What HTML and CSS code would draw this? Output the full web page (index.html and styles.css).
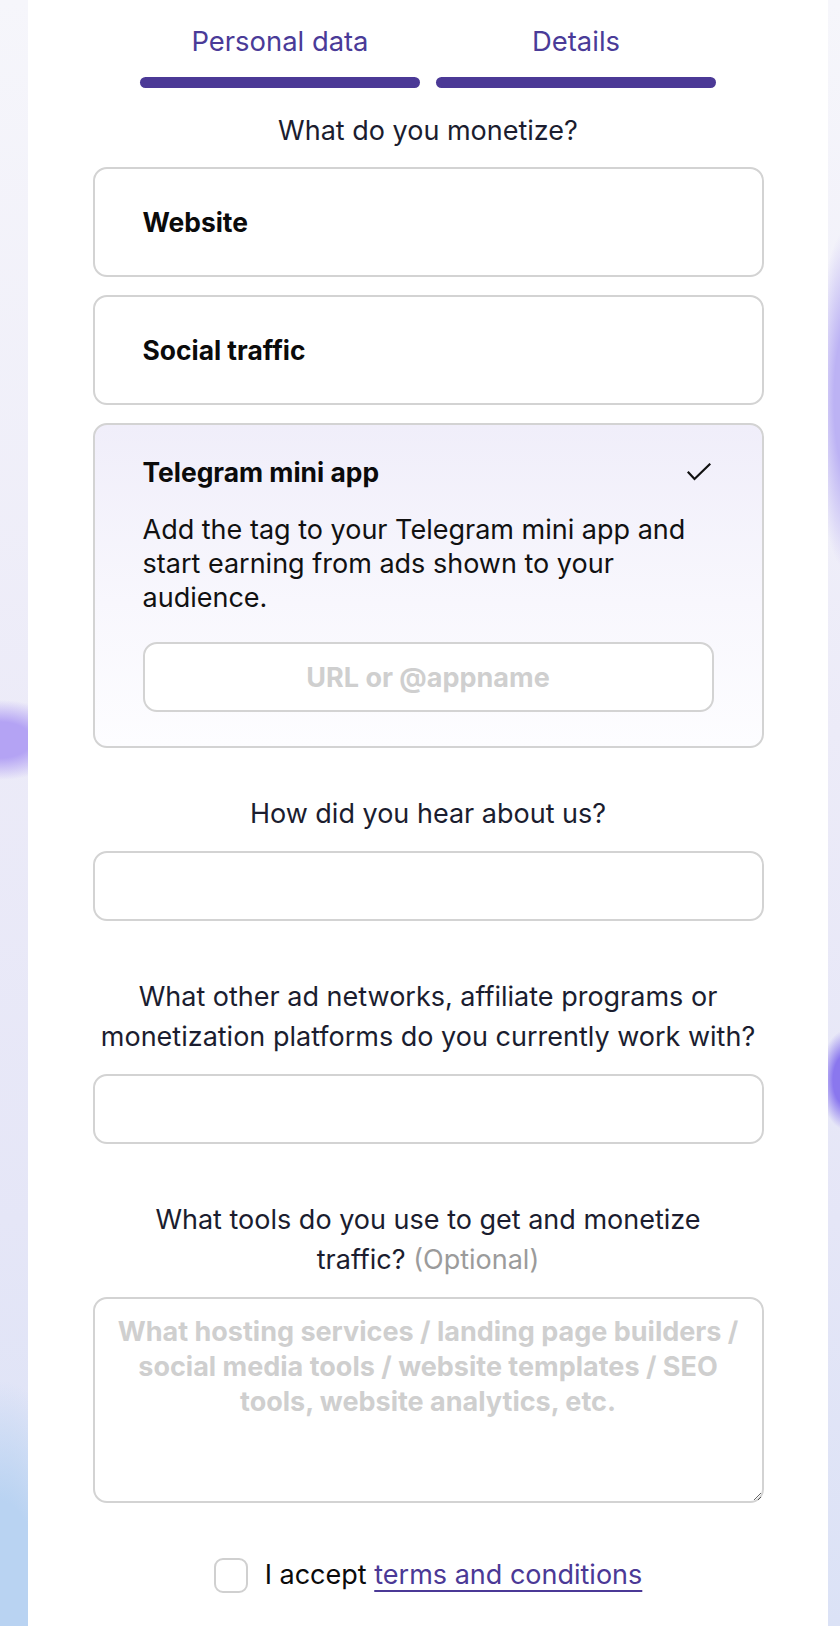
FILE: index.html
```html
<!DOCTYPE html>
<html lang="en">
<head>
<meta charset="utf-8">
<title>Details</title>
<link rel="stylesheet" href="styles.css">
</head>
<body>
<main class="panel">
  <nav class="steps">
    <div class="step"><span class="step-label">Personal data</span><span class="step-bar"></span></div>
    <div class="step"><span class="step-label">Details</span><span class="step-bar"></span></div>
  </nav>
  <form class="form">
    <p class="question">What do you monetize?</p>
    <div class="options">
      <div class="option"><span class="option-title">Website</span></div>
      <div class="option"><span class="option-title">Social traffic</span></div>
      <div class="option option--active">
        <div class="option-head">
          <span class="option-title">Telegram mini app</span>
          <svg class="check" width="24" height="18" viewBox="0 0 24 18"><path d="M1.5 9.5 L7.5 16 L22.5 1.5" fill="none" stroke="#111" stroke-width="2.2" stroke-linecap="square"/></svg>
        </div>
        <p class="option-desc">Add the tag to your Telegram mini app and start earning from ads shown to your audience.</p>
        <input class="field-input" type="text" placeholder="URL or @appname">
      </div>
    </div>
    <div class="field field--first">
      <label class="question" for="hear">How did you hear about us?</label>
      <input class="field-input" id="hear" type="text">
    </div>
    <div class="field">
      <label class="question" for="networks">What other ad networks, affiliate programs or<br>monetization platforms do you currently work with?</label>
      <input class="field-input" id="networks" type="text">
    </div>
    <div class="field">
      <label class="question" for="tools">What tools do you use to get and monetize<br>traffic? <span class="optional">(Optional)</span></label>
      <textarea class="field-input field-area" id="tools" placeholder="What hosting services / landing page builders / social media tools / website templates / SEO tools, website analytics, etc."></textarea>
    </div>
    <label class="consent">
      <span class="checkbox"></span>
      <span class="consent-text">I accept <a class="link" href="#">terms and conditions</a></span>
    </label>
  </form>
</main>
</body>
</html>
```

FILE: styles.css
```css
html, body {
  margin: 0;
  padding: 0;
}

body {
  min-height: 1626px;
  font-family: "Inter", "Lato", sans-serif;
  background:
    radial-gradient(70px 40px at 0 740px, #b4a3f4 45%, rgba(180, 163, 244, 0) 100%),
    radial-gradient(90px 220px at 0 1600px, #b9d3f2 45%, rgba(185, 211, 242, 0) 100%),
    radial-gradient(30px 170px at 846px 400px, #bcb2f4 40%, rgba(188, 178, 244, 0) 100%),
    radial-gradient(26px 50px at 846px 1080px, #8a77ee 50%, rgba(138, 119, 238, 0) 100%),
    linear-gradient(180deg, #f6f6fb 0%, #ecebf8 45%, #e5e6f7 75%, #dbe2f6 100%);
}

.panel {
  width: 800px;
  min-height: 1626px;
  margin-left: 28px;
  padding-top: 21px;
  box-sizing: border-box;
  background: #ffffff;
}

.steps {
  display: flex;
  justify-content: center;
  gap: 16px;
}

.step {
  width: 280px;
  display: flex;
  flex-direction: column;
  align-items: center;
  gap: 16px;
}

.step-label {
  font-size: 27.4px;
  line-height: 40px;
  color: #4a3b98;
}

.step-bar {
  width: 100%;
  height: 11px;
  border-radius: 6px;
  background: #4b3996;
}

.form {
  width: 671px;
  margin: 23px auto 0;
}

.question {
  display: block;
  margin: 0;
  text-align: center;
  font-size: 27px;
  line-height: 40px;
  color: #1b1d2f;
}

.optional {
  color: #9b9b9b;
}

.options {
  display: flex;
  flex-direction: column;
  gap: 18px;
  margin-top: 16px;
}

.option {
  border: 2px solid #d3d3d3;
  border-radius: 14px;
  padding: 38px 48px;
  background: #ffffff;
}

.option-title {
  font-weight: 700;
  font-size: 26.4px;
  line-height: 30px;
  color: #0b0b0b;
}

.option--active {
  padding: 32px 48px 34px;
  background: linear-gradient(180deg, #f0eefa 0%, #f8f7fd 55%, #fdfdff 100%);
}

.option-head {
  display: flex;
  justify-content: space-between;
  align-items: center;
}

.check {
  margin-right: 3px;
}

.option-desc {
  margin: 26px 0 27px;
  font-size: 27px;
  line-height: 34px;
  color: #111111;
}

.field {
  margin-top: 56px;
}

.field--first {
  margin-top: 46px;
}

.field .question {
  margin-bottom: 17px;
}

.field-input {
  display: block;
  width: 100%;
  height: 70px;
  box-sizing: border-box;
  border: 2px solid #d3d3d3;
  border-radius: 14px;
  background: #ffffff;
  font-family: inherit;
  font-size: 27px;
  font-weight: 700;
  text-align: center;
  color: #222222;
  outline: none;
}

.field-input::placeholder {
  color: #cfcfcf;
}

.field-area {
  height: 206px;
  padding: 15px 18px;
  line-height: 35px;
  resize: vertical;
}

.consent {
  display: flex;
  justify-content: center;
  align-items: center;
  gap: 17px;
  margin-top: 52px;
}

.checkbox {
  width: 34px;
  height: 35px;
  box-sizing: border-box;
  border: 2px solid #d0d0d0;
  border-radius: 9px;
  background: #ffffff;
}

.consent-text {
  font-size: 27px;
  line-height: 40px;
  color: #0b0b0b;
}

.link {
  color: #4b3996;
  text-decoration: underline;
  text-decoration-thickness: 2px;
  text-underline-offset: 6px;
}
```
